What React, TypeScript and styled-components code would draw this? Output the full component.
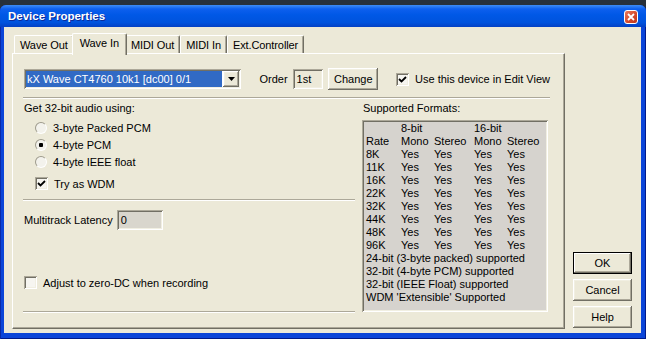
import React from "react";
import styled, { createGlobalStyle } from "styled-components";

const GlobalStyle = createGlobalStyle`
  html, body { margin: 0; padding: 0; width: 646px; height: 339px; overflow: hidden; background: #27303a; }
  body { font-family: "Liberation Sans", Arial, sans-serif; font-size: 11px; color: #000; }
  * { box-sizing: border-box; }
`;

const FACE = "#ece9d8";
const raised = `box-shadow: inset -1px -1px #716f64, inset 1px 1px #ffffff, inset -2px -2px #aca899, inset 2px 2px #f1efe2;`;
const sunken = `box-shadow: inset 1px 1px #aca899, inset -1px -1px #ffffff, inset 2px 2px #716f64, inset -2px -2px #f1efe2;`;

const Desktop = styled.div`
  padding-top: 5px;
  width: 646px;
  height: 339px;
`;

const Window = styled.div`
  width: 646px;
  height: 334px;
  display: flex;
  flex-direction: column;
  background: #0b45d8;
  border-radius: 6px 6px 0 0;
  box-shadow: inset 1px 0 #0a2aa8, inset -1px 0 #001a8a, inset 0 -1px #001a8a;
  overflow: hidden;
`;

const TitleBar = styled.div`
  height: 22px;
  flex: none;
  display: flex;
  align-items: center;
  justify-content: space-between;
  padding: 0 8px;
  background: linear-gradient(180deg, #3f8cf3 0%, #0d5fee 18%, #0058e6 45%, #0053dd 80%, #0441c4 100%);
`;

const Title = styled.span`
  color: #fff;
  font-weight: bold;
  font-size: 11.5px;
  text-shadow: 1px 1px #0c2c9a;
`;

const CloseBtn = styled.div`
  width: 14px;
  height: 14px;
  border: 1px solid #fff;
  border-radius: 3px;
  background: linear-gradient(135deg, #e97a5c 0%, #d4482a 60%, #b9341b 100%);
  display: flex;
  align-items: center;
  justify-content: center;
  margin-top: 1px;
`;

const Client = styled.div`
  flex: 1;
  margin: 0 5px 6px 4px;
  background: ${FACE};
  display: flex;
  gap: 8px;
  padding: 6px 9px 4px 8px;
`;

const TabControl = styled.div`
  width: 553px;
  display: flex;
  flex-direction: column;
`;

const TabStrip = styled.div`
  height: 20px;
  display: flex;
  align-items: flex-end;
  padding-left: 2px;
  position: relative;
  z-index: 1;
`;

const Tab = styled.div<{ $active?: boolean }>`
  height: ${(p) => (p.$active ? "22px" : "18px")};
  margin: ${(p) => (p.$active ? "0 -2px -2px -2px" : "0")};
  padding: ${(p) => (p.$active ? "2px 7px 0 7px" : "2px 5px 0 5px")};
  background: ${FACE};
  border-left: 1px solid #fff;
  border-top: 1px solid #fff;
  border-right: 1px solid #716f64;
  border-radius: 2px 2px 0 0;
  line-height: 14px;
  letter-spacing: -0.1px;
  white-space: nowrap;
  position: relative;
  z-index: ${(p) => (p.$active ? 2 : 0)};
  box-shadow: inset -1px 0 #aca899;
`;

const Panel = styled.div`
  flex: 1;
  background: ${FACE};
  border-top: 1px solid #fff;
  border-left: 1px solid #fff;
  border-right: 1px solid #716f64;
  border-bottom: 1px solid #716f64;
  box-shadow: inset -1px -1px #aca899;
  padding: 14px 14px 15px 10px;
  display: flex;
  flex-direction: column;
`;

const TopRow = styled.div`
  display: flex;
  align-items: center;
  height: 22px;
  padding-left: 1px;
`;

const Combo = styled.div`
  width: 219px;
  height: 20px;
  background: #fff;
  ${sunken}
  padding: 2px;
  display: flex;
  gap: 1px;
`;

const ComboValue = styled.div`
  flex: 1;
  background: #316ac5;
  color: #fff;
  line-height: 16px;
  padding-left: 1px;
  white-space: nowrap;
`;

const DropBtn = styled.div`
  width: 16px;
  background: ${FACE};
  ${raised}
  display: flex;
  align-items: center;
  justify-content: center;
`;

const Label = styled.span<{ $ml?: number }>`
  margin-left: ${(p) => p.$ml ?? 0}px;
  white-space: nowrap;
`;

const TextBox = styled.div<{ $w: number; $bg: string; $ml?: number }>`
  width: ${(p) => p.$w}px;
  height: 20px;
  margin-left: ${(p) => p.$ml ?? 0}px;
  background: ${(p) => p.$bg};
  ${sunken}
  padding: 3px 4px;
  line-height: 14px;
`;

const Button = styled.div<{ $w: number; $default?: boolean; $ml?: number }>`
  width: ${(p) => p.$w}px;
  height: 22px;
  margin-left: ${(p) => p.$ml ?? 0}px;
  background: ${FACE};
  display: flex;
  align-items: center;
  justify-content: center;
  ${(p) =>
    p.$default
      ? `border: 1px solid #000; box-shadow: inset -1px -1px #716f64, inset 1px 1px #ffffff, inset -2px -2px #aca899;`
      : raised}
`;

const CheckRow = styled.div<{ $ml?: number; $mt?: number }>`
  display: flex;
  align-items: center;
  gap: 6px;
  margin-left: ${(p) => p.$ml ?? 0}px;
  margin-top: ${(p) => p.$mt ?? 0}px;
  height: 17px;
`;

const CheckBox = styled.div`
  width: 13px;
  height: 13px;
  flex: none;
  background: #f6f5f0;
  ${sunken}
  display: flex;
  align-items: center;
  justify-content: center;
`;

const Radio = styled.div<{ $on?: boolean }>`
  width: 12px;
  height: 12px;
  flex: none;
  border-radius: 50%;
  background: linear-gradient(135deg, #9d9a8c 0%, #9d9a8c 45%, #ffffff 55%, #ffffff 100%);
  padding: 1px;
  display: flex;
  &::after {
    content: "";
    flex: 1;
    border-radius: 50%;
    background: ${(p) =>
      p.$on
        ? "radial-gradient(circle, #000 0, #000 2px, #f3f2ec 2.5px)"
        : "#f3f2ec"};
  }
`;

const Separator = styled.div<{ $mt: number }>`
  height: 2px;
  margin-top: ${(p) => p.$mt}px;
  border-top: 1px solid #aca899;
  border-bottom: 1px solid #fff;
  flex: none;
`;

const Columns = styled.div`
  flex: 1;
  display: flex;
  gap: 7px;
`;

const LeftCol = styled.div`
  width: 332px;
  display: flex;
  flex-direction: column;
`;

const RightCol = styled.div`
  width: 186px;
  display: flex;
  flex-direction: column;
`;

const Heading = styled.div`
  margin-top: 3px;
  line-height: 13px;
  padding-left: 1px;
  white-space: nowrap;
`;

const RadioGroup = styled.div`
  margin-top: 4px;
  padding-left: 12px;
  display: flex;
  flex-direction: column;
`;

const LatencyRow = styled.div`
  margin-top: 9px;
  display: flex;
  align-items: center;
  gap: 4px;
  padding-left: 1px;
`;

const Spacer = styled.div`
  flex: 1;
`;

const FormatsBox = styled.div`
  margin-top: 5px;
  height: 192px;
  background: #d6d3ce;
  ${sunken}
  padding: 2px 4px;
  display: grid;
  grid-template-columns: 35px 33px 40px 33px auto;
  grid-auto-rows: 13px;
  line-height: 13px;
  align-content: start;
`;

const Cell = styled.div<{ $span?: number }>`
  white-space: nowrap;
  ${(p) => (p.$span ? `grid-column: span ${p.$span};` : "")}
`;

const ButtonCol = styled.div`
  display: flex;
  flex-direction: column;
  justify-content: flex-end;
  gap: 5px;
  padding-bottom: 1px;
`;

const Check = () => (
  <svg width="9" height="9" viewBox="0 0 9 9">
    <path d="M1 4 L3.5 6.5 L8 2" stroke="#000" strokeWidth="1.8" fill="none" />
  </svg>
);

const rates = ["8K", "11K", "16K", "22K", "32K", "44K", "48K", "96K"];

export default function App() {
  return (
    <Desktop>
      <GlobalStyle />
      <Window>
        <TitleBar>
          <Title>Device Properties</Title>
          <CloseBtn>
            <svg width="8" height="8" viewBox="0 0 8 8">
              <path d="M1 1 L7 7 M7 1 L1 7" stroke="#fff" strokeWidth="1.8" />
            </svg>
          </CloseBtn>
        </TitleBar>
        <Client>
          <TabControl>
            <TabStrip>
              <Tab>Wave Out</Tab>
              <Tab $active>Wave In</Tab>
              <Tab>MIDI Out</Tab>
              <Tab>MIDI In</Tab>
              <Tab>Ext.Controller</Tab>
            </TabStrip>
            <Panel>
              <TopRow>
                <Combo>
                  <ComboValue>kX Wave CT4760 10k1 [dc00] 0/1</ComboValue>
                  <DropBtn>
                    <svg width="7" height="4" viewBox="0 0 7 4">
                      <path d="M0 0 H7 L3.5 4 Z" fill="#000" />
                    </svg>
                  </DropBtn>
                </Combo>
                <Label $ml={18}>Order</Label>
                <TextBox $w={31} $bg={FACE} $ml={5}>1st</TextBox>
                <Button $w={50} $ml={5}>Change</Button>
                <CheckRow $ml={18}>
                  <CheckBox><Check /></CheckBox>
                  <Label>Use this device in Edit View</Label>
                </CheckRow>
              </TopRow>
              <Separator $mt={7} />
              <Columns>
                <LeftCol>
                  <Heading>Get 32-bit audio using:</Heading>
                  <RadioGroup>
                    <CheckRow><Radio /><Label>3-byte Packed PCM</Label></CheckRow>
                    <CheckRow><Radio $on /><Label>4-byte PCM</Label></CheckRow>
                    <CheckRow><Radio /><Label>4-byte IEEE float</Label></CheckRow>
                    <CheckRow $mt={5}>
                      <CheckBox><Check /></CheckBox>
                      <Label>Try as WDM</Label>
                    </CheckRow>
                  </RadioGroup>
                  <Separator $mt={7} />
                  <LatencyRow>
                    <Label>Multitrack Latency</Label>
                    <TextBox $w={46} $bg="#d9d6cd">0</TextBox>
                  </LatencyRow>
                  <Spacer />
                  <CheckRow $ml={1}>
                    <CheckBox />
                    <Label>Adjust to zero-DC when recording</Label>
                  </CheckRow>
                  <Separator $mt={20} />
                </LeftCol>
                <RightCol>
                  <Heading>Supported Formats:</Heading>
                  <FormatsBox>
                    <Cell />
                    <Cell $span={2}>8-bit</Cell>
                    <Cell $span={2}>16-bit</Cell>
                    <Cell>Rate</Cell>
                    <Cell>Mono</Cell>
                    <Cell>Stereo</Cell>
                    <Cell>Mono</Cell>
                    <Cell>Stereo</Cell>
                    {rates.map((r) => (
                      <React.Fragment key={r}>
                        <Cell>{r}</Cell>
                        <Cell>Yes</Cell>
                        <Cell>Yes</Cell>
                        <Cell>Yes</Cell>
                        <Cell>Yes</Cell>
                      </React.Fragment>
                    ))}
                    <Cell $span={5}>24-bit (3-byte packed) supported</Cell>
                    <Cell $span={5}>32-bit (4-byte PCM) supported</Cell>
                    <Cell $span={5}>32-bit (IEEE Float) supported</Cell>
                    <Cell $span={5}>WDM 'Extensible' Supported</Cell>
                  </FormatsBox>
                </RightCol>
              </Columns>
            </Panel>
          </TabControl>
          <ButtonCol>
            <Button $w={59} $default>OK</Button>
            <Button $w={59}>Cancel</Button>
            <Button $w={59}>Help</Button>
          </ButtonCol>
        </Client>
      </Window>
    </Desktop>
  );
}
